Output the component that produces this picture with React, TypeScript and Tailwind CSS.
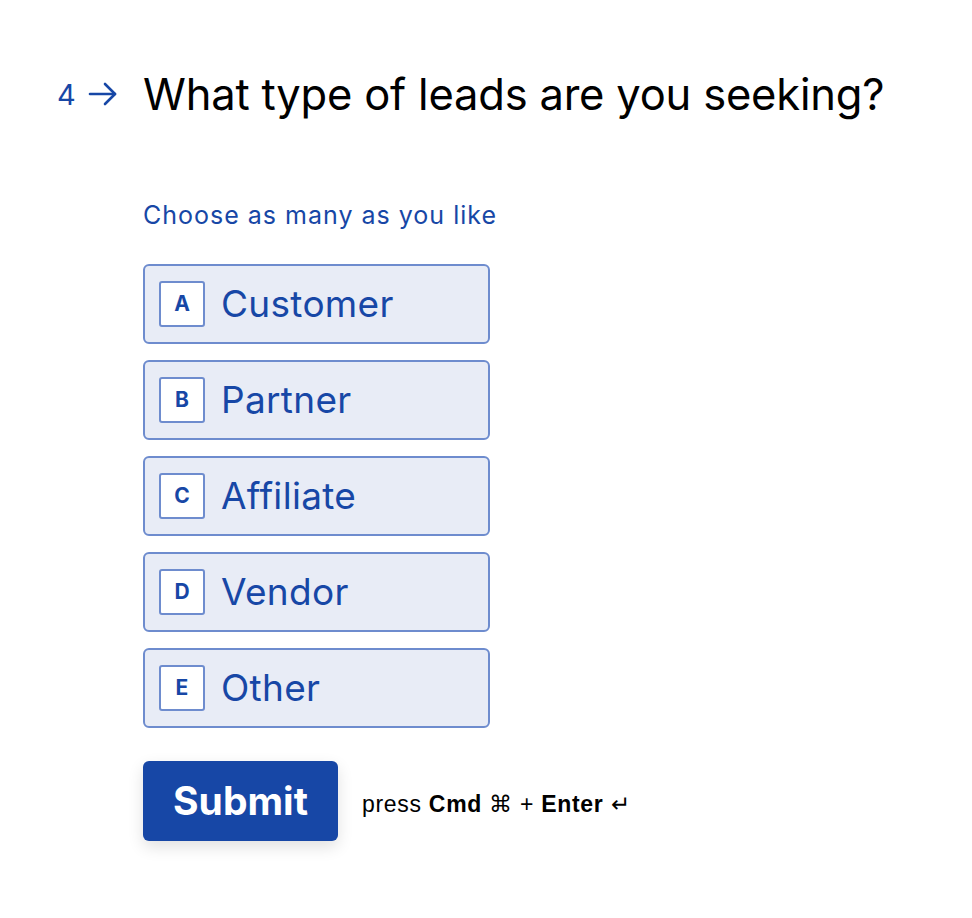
const options = [
  { key: "A", label: "Customer" },
  { key: "B", label: "Partner" },
  { key: "C", label: "Affiliate" },
  { key: "D", label: "Vendor" },
  { key: "E", label: "Other" },
];

export default function App() {
  return (
    <div className="min-h-screen bg-white font-['Inter',sans-serif]">
      <div className="flex pt-[64px]">
        {/* question number */}
        <div className="w-[143px] shrink-0 flex justify-start items-center gap-[12px] pl-[57px] h-[60px] text-[#1747a6]">
          <span className="text-[29px] leading-none">4</span>
          <svg width="30" height="26" viewBox="0 0 30 26" fill="none" stroke="currentColor" strokeWidth="2.6" strokeLinecap="round" strokeLinejoin="round">
            <path d="M2 13 H27" />
            <path d="M17 3 L27 13 L17 23" />
          </svg>
        </div>

        <div className="flex flex-col">
          <h1 className="text-[43.5px] leading-[60px] text-black tracking-[-0.2px]">
            What type of leads are you seeking?
          </h1>

          <p className="mt-[76px] text-[25px] leading-[30px] tracking-[1px] text-[#1747a6]">
            Choose as many as you like
          </p>

          {/* options */}
          <div className="mt-[34px] flex flex-col gap-[16px]">
            {options.map((o) => (
              <div
                key={o.key}
                className="w-[347px] h-[80px] flex items-center gap-[16px] px-[14px] rounded-[6px] border-2 border-[#6e8cce] bg-[#e8ecf6]"
              >
                <div className="w-[46px] h-[46px] flex items-center justify-center rounded-[3px] border-2 border-[#6e8cce] bg-white text-[21px] font-bold text-[#1747a6]">
                  {o.key}
                </div>
                <span className="text-[37px] tracking-[0.3px] text-[#1747a6]">{o.label}</span>
              </div>
            ))}
          </div>

          {/* submit */}
          <div className="mt-[33px] flex items-center gap-[24px]">
            <button className="w-[195px] h-[80px] rounded-[6px] bg-[#1747a6] text-white text-[39px] font-bold shadow-[0_6px_16px_rgba(0,0,0,0.12)]">
              Submit
            </button>
            <span className="mt-[7px] font-['Liberation_Sans',sans-serif] text-[23px] tracking-[0.7px] text-black">
              press <b>Cmd</b> ⌘ + <b>Enter</b> ↵
            </span>
          </div>
        </div>
      </div>
    </div>
  );
}
